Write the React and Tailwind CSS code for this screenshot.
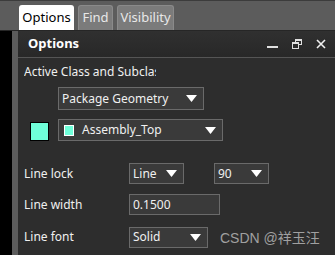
import React from "react";

const font = { fontFamily: '"Noto Sans", "Open Sans", sans-serif' };

function Arrow() {
  return (
    <svg width="11" height="7" viewBox="0 0 11 7" className="shrink-0">
      <polygon points="0,0 11,0 5.5,7" fill="#ffffff" />
    </svg>
  );
}

function Drop({ w, text, children }) {
  return (
    <div
      className="flex items-center h-[21px] border border-[#6a6a6a] bg-[#3a3a3a] pl-[3px] pr-[6px] box-border text-[12px] text-[#f0f0f0]"
      style={{ width: w }}
    >
      {children}
      <span className="flex-1 leading-none">{text}</span>
      <Arrow />
    </div>
  );
}

export default function App() {
  return (
    <div className="w-[335px] h-[255px] overflow-hidden flex flex-col bg-[#2d2d2d]" style={font}>
      {/* tab strip */}
      <div className="h-[31px] shrink-0 bg-[#5c5c5c] border-t border-[#3c3c3c] border-b border-b-[#262626] flex items-end pl-[19px] gap-[3px] box-border">
        <div className="h-[25px] w-[55px] bg-white rounded-t-[3px] flex items-center justify-center text-[13px] text-black">
          Options
        </div>
        <div className="h-[25px] w-[35px] ml-[1px] bg-[#7b7b7b] border border-[#8a8a8a] border-b-0 rounded-t-[3px] flex items-center justify-center text-[13px] text-[#e8e8e8] box-border">
          Find
        </div>
        <div className="h-[25px] w-[57px] ml-[1px] bg-[#7b7b7b] border border-[#8a8a8a] border-b-0 rounded-t-[3px] flex items-center justify-center text-[13px] text-[#e8e8e8] box-border">
          Visibility
        </div>
      </div>
      <div className="flex flex-1 min-h-0">
        <div className="w-[12px] bg-black shrink-0" />
        <div className="w-[6px] bg-[#5c5c5c] shrink-0" />
        <div className="flex-1 flex flex-col bg-[#2d2d2d]">
          {/* header */}
          <div className="h-[27px] shrink-0 flex items-center pl-[10px] pr-[9px] bg-gradient-to-b from-[#303030] to-[#282828] border-b border-[#555555] box-border">
            <span className="text-[13px] font-bold text-white flex-1">Options</span>
            <div className="flex items-center gap-[14px] text-white">
              <svg width="11" height="10" viewBox="0 0 11 10">
                <rect x="0" y="7" width="11" height="2" fill="#e0e0e0" />
              </svg>
              <svg width="10" height="10" viewBox="0 0 10 10">
                <rect x="3.5" y="0.5" width="6" height="5" fill="none" stroke="#e0e0e0" />
                <rect x="3.5" y="0.5" width="6" height="1.5" fill="#e0e0e0" />
                <rect x="0.5" y="3.5" width="6" height="6" fill="#2c2c2c" stroke="#e0e0e0" />
                <rect x="0.5" y="3.5" width="6" height="1.5" fill="#e0e0e0" />
              </svg>
              <svg width="10" height="10" viewBox="0 0 10 10">
                <path d="M1 1 L9 9 M9 1 L1 9" stroke="#f0f0f0" strokeWidth="1.6" />
              </svg>
            </div>
          </div>
          {/* body */}
          <div className="flex flex-col pl-[6px] text-[12px] text-[#f0f0f0]">
            <div className="mt-[6px] h-[16px] leading-[16px] w-[132px] overflow-hidden whitespace-nowrap">
              Active Class and Subclass
            </div>
            <div className="mt-[7px] ml-[34px]">
              <div
                className="flex items-center h-[23px] w-[146px] border border-[#6a6a6a] bg-[#3a3a3a] pl-[3px] pr-[6px] box-border"
              >
                <span className="flex-1 leading-none">Package Geometry</span>
                <Arrow />
              </div>
            </div>
            <div className="mt-[9px] flex items-center">
              <div className="ml-[6px] w-[19px] h-[19px] mt-[2px] border border-black bg-[#6fffd9] box-border" />
              <div className="ml-[9px] flex items-center h-[22px] w-[165px] border border-[#6a6a6a] bg-[#3a3a3a] pl-[5px] pr-[6px] box-border">
                <div className="w-[10px] h-[11px] border border-white bg-[#6fffd9] box-border mr-[8px]" />
                <span className="flex-1 leading-none">Assembly_Top</span>
                <Arrow />
              </div>
            </div>
            <div className="mt-[22px] flex items-center">
              <span className="w-[105px]">Line lock</span>
              <Drop w={55} text="Line" />
              <div className="ml-[30px]">
                <Drop w={55} text="90" />
              </div>
            </div>
            <div className="mt-[10px] flex items-center">
              <span className="w-[105px]">Line width</span>
              <div className="flex items-center h-[21px] w-[91px] border border-[#6a6a6a] bg-[#3a3a3a] pl-[3px] box-border leading-none">
                0.1500
              </div>
            </div>
            <div className="mt-[10px] flex items-center">
              <span className="w-[105px]">Line font</span>
              <Drop w={79} text="Solid" />
              <span className="ml-[12px] mt-[3px] text-[14px] text-[#a0a0a0]" style={{ fontFamily: '"Liberation Sans", "Noto Sans CJK SC", sans-serif' }}>
                CSDN @祥玉汪
              </span>
            </div>
          </div>
        </div>
      </div>
    </div>
  );
}
